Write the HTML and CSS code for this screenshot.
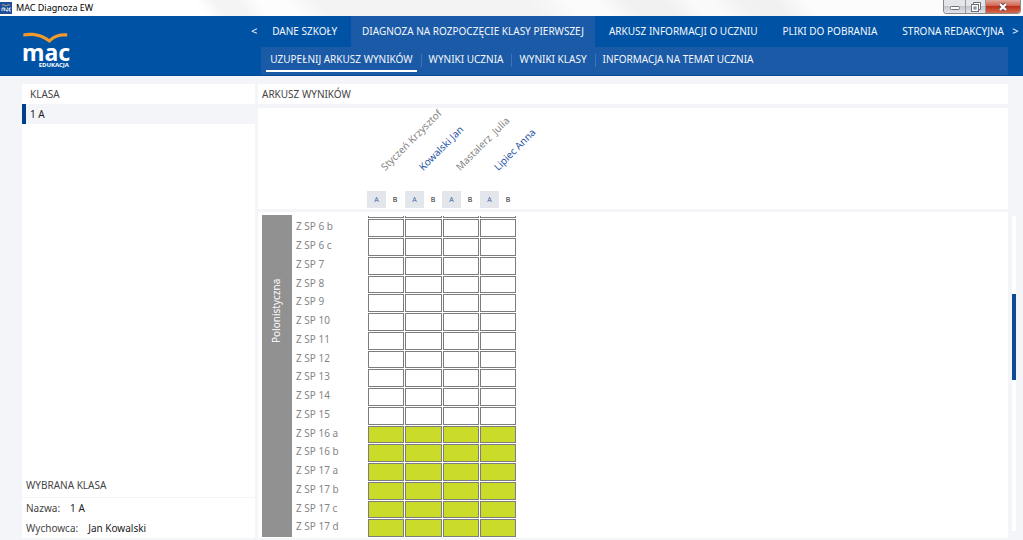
FILE: index.html
```html
<!DOCTYPE html>
<html lang="pl">
<head>
<meta charset="utf-8">
<title>MAC Diagnoza EW</title>
<link rel="stylesheet" href="styles.css">
</head>
<body>
<div class="titlebar">
  <svg class="app-icon" viewBox="0 0 12 12" aria-hidden="true"><rect width="12" height="12" fill="#1c4f9c"/><path d="M2 3Q4 2 6 4Q8 2 10 3" fill="none" stroke="#b9a48c"/><path d="M2 9V6h2v3M4 6h1v3M7 6h1v3H6.500V7.500M11 6H9.500v3H11" fill="none" stroke="#fff" stroke-width=".8"/></svg>
  <span class="app-name">MAC Diagnoza EW</span>
  <div class="window-buttons">
    <button class="win" aria-label="Minimalizuj"><svg width="12" height="10" viewBox="0 0 12 10"><rect x="1.500" y="4.500" width="9" height="3" rx="1" fill="#fff" stroke="#6b6f78"/></svg></button>
    <button class="win win-restore" aria-label="Przywróć"><svg width="12" height="12" viewBox="0 0 12 12"><path d="M3.500 3V1.500h7v7H9" fill="#fff" stroke="#6b6f78"/><rect x="1.500" y="3.500" width="7" height="7" fill="#fff" stroke="#6b6f78"/><rect x="4" y="6" width="2" height="2" fill="none" stroke="#6b6f78"/></svg></button>
    <button class="win win-close" aria-label="Zamknij"><svg width="12" height="10" viewBox="0 0 12 10"><path d="M3 2l6 6M9 2L3 8" stroke="#6b4a4a" stroke-width="4"/><path d="M3 2l6 6M9 2L3 8" stroke="#fff" stroke-width="2.200"/></svg></button>
  </div>
</div>

<header class="header">
  <div class="brand">
    <svg class="bird" viewBox="0 0 48 13" aria-hidden="true"><path d="M0 1.500C12 -.5 21 2.500 28 7.500C33 3 39 1 47.500 1.500V5C39 4.500 34 6 28.500 12C20 5.500 12 3 0 5Z" fill="#f39a2b"/></svg>
    <span class="brand-name">mac</span>
    <span class="brand-sub">EDUKACJA</span>
  </div>
  <button class="arrow arrow-left" aria-label="Poprzednie">&lt;</button>
  <div class="menus">
    <nav class="tabs">
      <a class="tab" href="#">DANE SZKOŁY</a>
      <a class="tab active" href="#">DIAGNOZA NA ROZPOCZĘCIE KLASY PIERWSZEJ</a>
      <a class="tab" href="#">ARKUSZ INFORMACJI O UCZNIU</a>
      <a class="tab" href="#">PLIKI DO POBRANIA</a>
      <a class="tab" href="#">STRONA REDAKCYJNA</a>
    </nav>
    <nav class="subtabs">
      <a class="subtab current" href="#">UZUPEŁNIJ ARKUSZ WYNIKÓW</a>
      <a class="subtab" href="#">WYNIKI UCZNIA</a>
      <a class="subtab" href="#">WYNIKI KLASY</a>
      <a class="subtab" href="#">INFORMACJA NA TEMAT UCZNIA</a>
    </nav>
  </div>
  <button class="arrow arrow-right" aria-label="Następne">&gt;</button>
</header>

<main class="main">
  <aside class="sidebar">
    <h2 class="panel-title klasa">KLASA</h2>
    <button class="class-item">1 A</button>
    <div class="class-space"></div>
    <h2 class="chosen-title">WYBRANA KLASA</h2>
    <dl class="chosen">
      <div class="pair"><dt>Nazwa:</dt><dd>1 A</dd></div>
      <div class="pair"><dt>Wychowca:</dt><dd>Jan Kowalski</dd></div>
    </dl>
  </aside>

  <section class="content">
    <h1 class="panel-title">ARKUSZ WYNIKÓW</h1>
    <div class="students">
      <div class="student"><span class="name">Styczeń Krzysztof</span><button class="group a">A</button><button class="group">B</button></div>
      <div class="student"><span class="name linked">Kowalski Jan</span><button class="group a">A</button><button class="group">B</button></div>
      <div class="student"><span class="name">Mastalerz&nbsp; Julia</span><button class="group a">A</button><button class="group">B</button></div>
      <div class="student"><span class="name linked">Lipiec Anna</span><button class="group a">A</button><button class="group">B</button></div>
    </div>
    <div class="results">
      <table class="sheet">
        <colgroup><col class="col-area"><col class="col-task"><col><col><col><col></colgroup>
        <tbody>
          <tr class="cut"><th class="area" rowspan="18" scope="rowgroup"><span class="area-name">Polonistyczna</span></th><td></td><td><i class="box"></i></td><td><i class="box"></i></td><td><i class="box"></i></td><td><i class="box"></i></td></tr>
          <tr><th class="task" scope="row">Z SP 6 b</th><td><i class="box"></i></td><td><i class="box"></i></td><td><i class="box"></i></td><td><i class="box"></i></td></tr>
          <tr><th class="task" scope="row">Z SP 6 c</th><td><i class="box"></i></td><td><i class="box"></i></td><td><i class="box"></i></td><td><i class="box"></i></td></tr>
          <tr><th class="task" scope="row">Z SP 7</th><td><i class="box"></i></td><td><i class="box"></i></td><td><i class="box"></i></td><td><i class="box"></i></td></tr>
          <tr><th class="task" scope="row">Z SP 8</th><td><i class="box"></i></td><td><i class="box"></i></td><td><i class="box"></i></td><td><i class="box"></i></td></tr>
          <tr><th class="task" scope="row">Z SP 9</th><td><i class="box"></i></td><td><i class="box"></i></td><td><i class="box"></i></td><td><i class="box"></i></td></tr>
          <tr><th class="task" scope="row">Z SP 10</th><td><i class="box"></i></td><td><i class="box"></i></td><td><i class="box"></i></td><td><i class="box"></i></td></tr>
          <tr><th class="task" scope="row">Z SP 11</th><td><i class="box"></i></td><td><i class="box"></i></td><td><i class="box"></i></td><td><i class="box"></i></td></tr>
          <tr><th class="task" scope="row">Z SP 12</th><td><i class="box"></i></td><td><i class="box"></i></td><td><i class="box"></i></td><td><i class="box"></i></td></tr>
          <tr><th class="task" scope="row">Z SP 13</th><td><i class="box"></i></td><td><i class="box"></i></td><td><i class="box"></i></td><td><i class="box"></i></td></tr>
          <tr><th class="task" scope="row">Z SP 14</th><td><i class="box"></i></td><td><i class="box"></i></td><td><i class="box"></i></td><td><i class="box"></i></td></tr>
          <tr><th class="task" scope="row">Z SP 15</th><td><i class="box"></i></td><td><i class="box"></i></td><td><i class="box"></i></td><td><i class="box"></i></td></tr>
          <tr class="open"><th class="task" scope="row">Z SP 16 a</th><td><i class="box"></i></td><td><i class="box"></i></td><td><i class="box"></i></td><td><i class="box"></i></td></tr>
          <tr class="open"><th class="task" scope="row">Z SP 16 b</th><td><i class="box"></i></td><td><i class="box"></i></td><td><i class="box"></i></td><td><i class="box"></i></td></tr>
          <tr class="open"><th class="task" scope="row">Z SP 17 a</th><td><i class="box"></i></td><td><i class="box"></i></td><td><i class="box"></i></td><td><i class="box"></i></td></tr>
          <tr class="open"><th class="task" scope="row">Z SP 17 b</th><td><i class="box"></i></td><td><i class="box"></i></td><td><i class="box"></i></td><td><i class="box"></i></td></tr>
          <tr class="open"><th class="task" scope="row">Z SP 17 c</th><td><i class="box"></i></td><td><i class="box"></i></td><td><i class="box"></i></td><td><i class="box"></i></td></tr>
          <tr class="open"><th class="task" scope="row">Z SP 17 d</th><td><i class="box"></i></td><td><i class="box"></i></td><td><i class="box"></i></td><td><i class="box"></i></td></tr>
        </tbody>
      </table>
    </div>
  </section>

  <div class="scroll-lane">
    <div class="track"><div class="thumb"></div></div>
  </div>
</main>
</body>
</html>
```

FILE: styles.css
```css
* { box-sizing: border-box; }

body {
  margin: 0;
  min-height: 100vh;
  display: flex;
  flex-direction: column;
  background: #f3f5f8;
  color: #222;
  font: 10px/16px "Noto Sans", "Open Sans", sans-serif;
}

button {
  margin: 0;
  padding: 0;
  border: 0;
  background: none;
  color: inherit;
  font: inherit;
}

a { color: inherit; text-decoration: none; }
h1, h2, dl, dd { margin: 0; }

/* Title bar */
.titlebar {
  display: flex;
  height: 16px;
  padding-right: 2px;
  background: linear-gradient(50deg, #fff 0 20%, #f4f4f4 22% 24%, #fdfdfd 26% 29%, #f3f3f3 32% 52%, #fbfbfb 56% 59%, #f0f0f0 62% 65%, #fafafa 68% 70%, #f1f1f1 73% 76%, #fcfcfc 79%);
}
.app-icon { width: 12px; height: 12px; margin: 2px 4px 0 0; }
.app-name { flex: 1; font-size: 9px; color: #000; }
.window-buttons {
  display: flex;
  height: 14px;
  border: 1px solid #85888f;
  border-top: 0;
  border-radius: 0 0 4px 4px;
  overflow: hidden;
}
.win {
  display: grid;
  place-items: center;
  width: 21px;
  background: linear-gradient(#e3e5e8 45%, #c3c7cd 50%, #e2e5ea);
}
.win-restore { border: 1px solid #96999f; border-width: 0 1px; }
.win-close { width: 34px; background: linear-gradient(#e0a99e, #cf6450 45%, #bd301a 50%, #d4694c); }

/* Header */
.header {
  display: flex;
  height: 60px;
  background: #0053a4;
  border-bottom: 1px solid #004890;
  color: #f4f8fd;
}
.brand {
  display: flex;
  flex-direction: column;
  width: 47px;
  margin: 16px 0 0 22px;
  color: #fff;
}
.bird { width: 47px; height: 12px; }
.brand-name { font: bold 23px/16px "Noto Sans", sans-serif; }
.brand-sub { font: bold 6px/10px "Noto Sans", sans-serif; text-align: right; }
.arrow { align-self: flex-start; height: 30px; font-size: 11px; }
.arrow-left { width: 14px; margin-left: auto; }
.arrow-right { width: 15px; }
.menus { width: 73%; }
.tabs { display: flex; justify-content: space-between; height: 31px; white-space: nowrap; }
.tab { padding: 0 11px; line-height: 30px; }
.tab:last-child { padding-right: 4px; }
.tab.active, .subtabs { background: #1b5aa6; }
.subtabs { display: flex; height: 28px; padding-left: 5px; white-space: nowrap; }
.subtab { position: relative; padding: 0 8px; line-height: 25px; }
.subtab.current { height: 25px; margin-right: 4px; padding: 0 4px; border-bottom: 2px solid #fff; }
.subtab + .subtab::before {
  content: "";
  position: absolute;
  left: 0;
  top: 7px;
  height: 13px;
  border-left: 1px solid #3f75b6;
}

/* Page body */
.main { flex: 1; display: flex; padding: 8px 0 2px 22px; }
.panel-title {
  height: 20px;
  padding-left: 4px;
  background: #fff;
  color: #444;
  font: inherit;
  line-height: 20px;
}
.klasa { padding-left: 8px; }

.sidebar { display: flex; flex-direction: column; width: 233px; margin-right: 3px; }
.class-item {
  height: 20px;
  padding-left: 4px;
  border-left: 4px solid #003f8c;
  text-align: left;
}
.class-space { flex: 1; background: #fff; }
.chosen-title {
  height: 20px;
  margin-bottom: 1px;
  padding-left: 4px;
  background: #fff;
  color: #444;
  font: inherit;
}
.chosen { padding: 0 4px; background: #fff; }
.pair { display: flex; gap: 10px; line-height: 20px; }
dt { color: #444; }

.content { flex: 1; display: flex; flex-direction: column; }
.students {
  display: flex;
  align-items: flex-end;
  height: 101px;
  margin: 4px 0 3px;
  padding: 0 0 1px 109px;
  background: #fff;
}
.student {
  position: relative;
  display: grid;
  grid-template-columns: 19px 18px;
  margin-right: 1px;
}
.student:nth-child(2n) { margin-right: 0; }
.name {
  position: absolute;
  left: 21px;
  bottom: 34px;
  transform: rotate(-45deg);
  transform-origin: left bottom;
  color: #858585;
  white-space: nowrap;
}
.name.linked { color: #2b55a5; }
.group { height: 17px; font-size: 7px; line-height: 17px; color: #222; }
.group.a { background: #e3e6ea; color: #3a66ab; }

.results { flex: 1; padding: 3px 4px 0; background: #fff; }
.sheet { width: 254px; table-layout: fixed; border-collapse: collapse; color: #858585; }
.sheet td, .sheet th { padding: 0; font-weight: normal; }
.sheet tr { height: 19px; }
.sheet tr:nth-child(4n + 1) { height: 18px; }
.sheet tr.cut { height: 3px; }
.col-area { width: 30px; }
.col-task { width: 75px; }
.area { background: #919191; color: #fff; vertical-align: top; }
.area-name {
  display: block;
  height: 128px;
  width: 28px;
  line-height: 28px;
  writing-mode: vertical-rl;
  transform: rotate(180deg);
  text-align: left;
}
.sheet .task { padding-left: 4px; line-height: 17px; text-align: left; vertical-align: top; }
.box {
  display: block;
  height: 18px;
  margin: 0 0 0 1px;
  border: 1px solid #7d7d7d;
}
.sheet tr:nth-child(4n + 1) .box { height: 17px; }
.sheet tr.cut .box { height: 2px; border-top: 0; }
.open .box { background: #cadb2a; }

.scroll-lane { display: flex; width: 15px; padding: 132px 0 7px 4px; }
.track { width: 4px; padding-top: 78px; background: #fff; }
.thumb { height: 86px; background: #0a4a96; }
```
